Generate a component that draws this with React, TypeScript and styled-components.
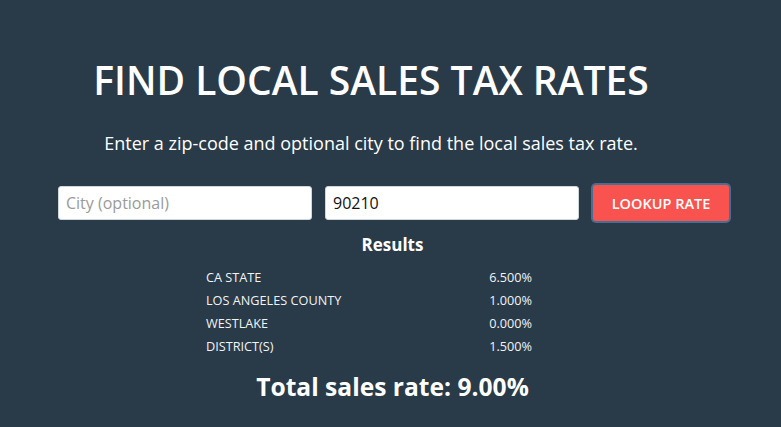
import React from 'react';
import styled, { createGlobalStyle } from 'styled-components';

const GlobalStyle = createGlobalStyle`
  html, body {
    margin: 0;
    padding: 0;
    background: #293a48;
  }
  body {
    font-family: 'Open Sans', 'Noto Sans', sans-serif;
    color: #ffffff;
  }
`;

const Page = styled.div`
  width: 781px;
  height: 427px;
  box-sizing: border-box;
  padding-top: 52px;
  overflow: hidden;
`;

const Header = styled.header`
  width: 742px;
  text-align: center;
`;

const Title = styled.h1`
  margin: 0;
  font-size: 39px;
  font-weight: 600;
  line-height: 56px;
`;

const Subtitle = styled.p`
  margin: 23px 0 0;
  font-size: 18px;
  line-height: 24px;
`;

const Form = styled.form`
  display: flex;
  align-items: center;
  gap: 13px;
  margin: 30px 0 0 58px;
`;

const Field = styled.input`
  width: 254px;
  height: 34px;
  box-sizing: border-box;
  border: 1px solid #cfd6dc;
  border-radius: 3px;
  padding: 0 7px;
  font-family: 'Open Sans', sans-serif;
  font-size: 16px;
  color: #111;
  background: #fff;
  outline: none;
  &::placeholder {
    color: #9a9a9a;
  }
`;

const LookupButton = styled.button`
  width: 136px;
  height: 36px;
  margin-left: 1px;
  box-sizing: border-box;
  border: none;
  border-radius: 3px;
  background: #f9534f;
  color: #fff;
  font-family: 'Open Sans', sans-serif;
  font-size: 14.5px;
  font-weight: 600;
  text-transform: uppercase;
  box-shadow: 0 0 0 2px #4a6d92;
  cursor: pointer;
`;

const Results = styled.section`
  width: 781px;
  margin-top: 12px;
  display: flex;
  flex-direction: column;
  align-items: center;
`;

const ResultsTitle = styled.h2`
  margin: 0 0 0 4px;
  font-size: 17px;
  font-weight: 700;
  line-height: 24px;
`;

const RateTable = styled.div`
  width: 326px;
  margin: 9px 0 0 -43px;
`;

const RateRow = styled.div`
  display: flex;
  justify-content: space-between;
  font-size: 12.7px;
  line-height: 23px;
  color: #f2f4f6;
`;

const Total = styled.div`
  margin: 13px 0 0 4px;
  font-size: 24.6px;
  font-weight: 700;
  line-height: 32px;
`;

const rates = [
  { name: 'CA STATE', rate: '6.500%' },
  { name: 'LOS ANGELES COUNTY', rate: '1.000%' },
  { name: 'WESTLAKE', rate: '0.000%' },
  { name: 'DISTRICT(S)', rate: '1.500%' },
];

function App() {
  return (
    <Page>
      <GlobalStyle />
      <Header>
        <Title>FIND LOCAL SALES TAX RATES</Title>
        <Subtitle>Enter a zip-code and optional city to find the local sales tax rate.</Subtitle>
      </Header>
      <Form onSubmit={(e) => e.preventDefault()}>
        <Field placeholder="City (optional)" />
        <Field defaultValue="90210" />
        <LookupButton type="submit">Lookup Rate</LookupButton>
      </Form>
      <Results>
        <ResultsTitle>Results</ResultsTitle>
        <RateTable>
          {rates.map((r) => (
            <RateRow key={r.name}>
              <span>{r.name}</span>
              <span>{r.rate}</span>
            </RateRow>
          ))}
        </RateTable>
        <Total>Total sales rate: 9.00%</Total>
      </Results>
    </Page>
  );
}

export default App;
